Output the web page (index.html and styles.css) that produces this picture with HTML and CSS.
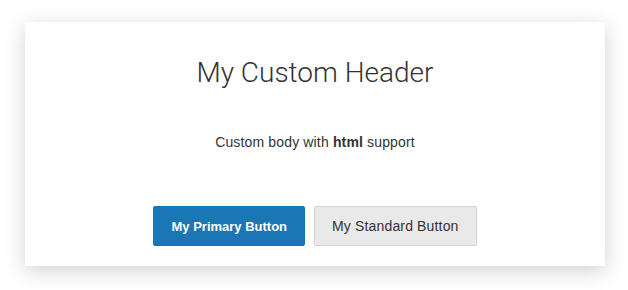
FILE: index.html
```html
<!DOCTYPE html>
<html lang="en">
<head>
    <meta charset="UTF-8">
    <meta name="viewport" content="width=device-width, initial-scale=1.0">
    <title>Custom Modal</title>
    <link rel="stylesheet" href="styles.css">
</head>
<body>
    <div class="modal">
        <h1 class="modal-title">My Custom Header</h1>
        <p class="modal-body">Custom body with <strong>html</strong> support</p>
        <div class="modal-actions">
            <button class="button primary">My Primary Button</button>
            <button class="button">My Standard Button</button>
        </div>
    </div>
</body>
</html>
```

FILE: styles.css
```css
body {
    margin: 0;
    padding: 22px 23px 24px 25px;
    background-color: #fff;
    font-family: "Liberation Sans", Arial, sans-serif;
    color: #333;
}
.modal {
    width: 580px;
    height: 244px;
    box-sizing: border-box;
    background-color: #fff;
    box-shadow: 0 5px 20px rgba(0, 0, 0, 0.18);
    display: flex;
    flex-direction: column;
    align-items: center;
    padding: 33px 20px 20px;
}
.modal-title {
    margin: 0;
    font-family: Roboto, "Liberation Sans", sans-serif;
    font-weight: 300;
    font-size: 28px;
    line-height: 36px;
    color: #333;
}
.modal-body {
    margin: 42px 0 0;
    font-size: 14px;
    line-height: 18px;
    letter-spacing: 0.15px;
}
.modal-actions {
    display: flex;
    gap: 9px;
    margin-top: auto;
}
.button {
    height: 40px;
    padding: 0 17px;
    border: 1px solid #d3d3d3;
    border-radius: 2px;
    background-color: #e9e9e9;
    color: #333;
    font-family: "Liberation Sans", Arial, sans-serif;
    font-size: 14px;
    letter-spacing: 0.15px;
}
.button.primary {
    background-color: #1a76b4;
    border-color: #1a76b4;
    color: #fff;
    font-weight: bold;
    font-size: 13px;
    letter-spacing: 0;
}
```
